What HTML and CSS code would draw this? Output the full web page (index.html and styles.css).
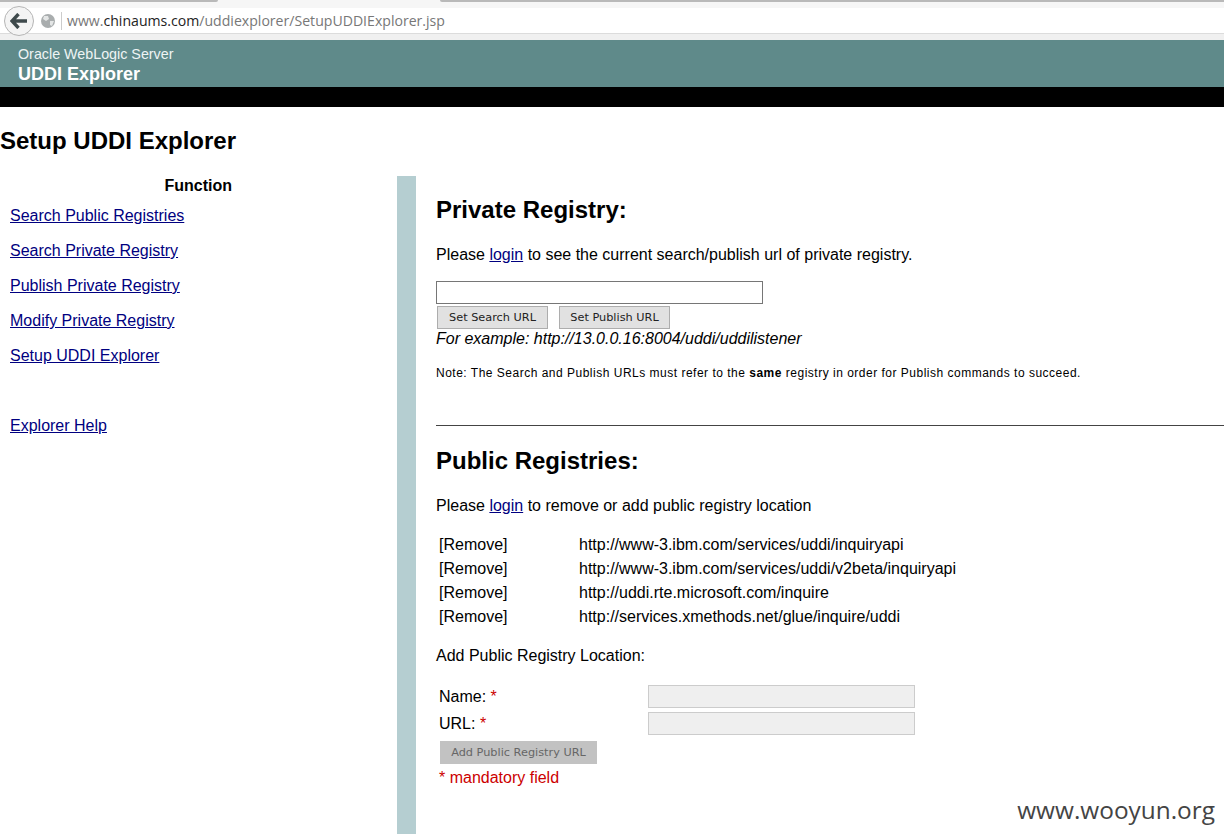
FILE: index.html
```html
<!DOCTYPE html>
<html>
<head>
<meta charset="utf-8">
<title>Setup UDDI Explorer</title>
<link rel="stylesheet" href="styles.css">
</head>
<body>
<div class="chrome">
  <div class="tabstrip"><span class="tabedge left"></span><span class="tabedge right"></span></div>
  <div class="navbar">
    <span class="back">
      <svg width="18" height="16" viewBox="0 0 18 16"><path d="M8.5 1 L2 8 L8.5 15 M2.5 8 H17" fill="none" stroke="#3f4a4c" stroke-width="3.4"/></svg>
    </span>
    <svg class="globe" width="14" height="14" viewBox="0 0 14 14"><circle cx="7" cy="7" r="7" fill="#a9adae"/><path d="M3 2 L7 2 L8 5 L5 7 L2 5 Z M9 7 L13 7 L11 12 L9 11 Z" fill="#e4e6e6"/></svg>
    <span class="sep"></span>
    <span class="url">www.<span class="domain">chinaums.com</span>/uddiexplorer/SetupUDDIExplorer.jsp</span>
  </div>
</div>
<header class="banner">
  <div class="product">Oracle WebLogic Server</div>
  <div class="appname">UDDI Explorer</div>
</header>
<div class="blackbar"></div>
<h1 class="pagetitle">Setup UDDI Explorer</h1>
<div class="columns">
  <nav class="side">
    <div class="sidehead">Function</div>
    <a class="sidelink" href="#">Search Public Registries</a>
    <a class="sidelink" href="#">Search Private Registry</a>
    <a class="sidelink" href="#">Publish Private Registry</a>
    <a class="sidelink" href="#">Modify Private Registry</a>
    <a class="sidelink" href="#">Setup UDDI Explorer</a>
    <a class="sidelink helplink" href="#">Explorer Help</a>
  </nav>
  <div class="stripe"></div>
  <main class="content">
    <h2 class="sectitle first">Private Registry:</h2>
    <p class="line">Please <a href="#">login</a> to see the current search/publish url of private registry.</p>
    <input class="urlinput" type="text">
    <div class="btnrow">
      <button class="btn">Set Search URL</button>
      <button class="btn">Set Publish URL</button>
    </div>
    <div class="example">For example: http://13.0.0.16:8004/uddi/uddilistener</div>
    <p class="note">Note: The Search and Publish URLs must refer to the <b>same</b> registry in order for Publish commands to succeed.</p>
    <hr class="rule">
    <h2 class="sectitle">Public Registries:</h2>
    <p class="line">Please <a href="#">login</a> to remove or add public registry location</p>
    <div class="registries">
      <span>[Remove]</span><span>http://www-3.ibm.com/services/uddi/inquiryapi</span>
      <span>[Remove]</span><span>http://www-3.ibm.com/services/uddi/v2beta/inquiryapi</span>
      <span>[Remove]</span><span>http://uddi.rte.microsoft.com/inquire</span>
      <span>[Remove]</span><span>http://services.xmethods.net/glue/inquire/uddi</span>
    </div>
    <p class="line addtitle">Add Public Registry Location:</p>
    <div class="addform">
      <span>Name: <span class="req">*</span></span><input class="field" type="text" disabled>
      <span>URL: <span class="req">*</span></span><input class="field" type="text" disabled>
    </div>
    <button class="btn addbtn" disabled>Add Public Registry URL</button>
    <div class="mandatory">* mandatory field</div>
  </main>
</div>
<div class="watermark">www.wooyun.org</div>
</body>
</html>
```
FILE: styles.css
```css
html, body { margin: 0; padding: 0; background: #fff; }
body { position: relative; width: 1224px; height: 840px; overflow: hidden; font-family: "Liberation Sans", Arial, sans-serif; font-size: 16px; color: #000; }
a { color: #000080; }
.chrome { height: 40px; background: #f0f0f0; display: flex; flex-direction: column; }
.tabstrip { height: 8px; background: #f6f6f6; display: flex; justify-content: space-between; }
.tabedge { height: 2px; background: #b9b9b9; }
.tabedge.left { width: 218px; border-bottom-right-radius: 4px; }
.tabedge.right { width: 784px; border-bottom-left-radius: 4px; }
.navbar { height: 26px; background: #fff; display: flex; align-items: center; border-bottom: 1px solid #dcdcdc; box-sizing: border-box; }
.back { width: 30px; height: 30px; margin-left: 4px; border: 1px solid #b5b5b5; border-radius: 50%; background: #f4f4f4; display: flex; align-items: center; justify-content: center; box-sizing: border-box; }
.globe { margin-left: 7px; }
.sep { width: 1px; height: 18px; background: #ccc; margin-left: 6px; }
.url { font-family: "Open Sans", "Noto Sans", sans-serif; font-size: 14.1px; color: #777; margin-left: 5px; }
.domain { color: #222; }
.banner { height: 47px; background: #5f8a8a; color: #fff; padding-left: 18px; box-sizing: border-box; padding-top: 5px; }
.product { font-size: 14.3px; line-height: 18px; color: #eef4f4; }
.appname { font-size: 18px; font-weight: bold; line-height: 22px; }
.blackbar { height: 20px; background: #000; }
.pagetitle { margin: 19px 0 0; font-size: 24px; line-height: 30px; font-weight: bold; }
.columns { display: flex; margin-top: 20px; height: 658px; }
.side { width: 397px; flex: none; box-sizing: border-box; padding-left: 10px; padding-top: 1px; }
.sidehead { font-weight: bold; width: 222px; text-align: right; line-height: 18px; margin-bottom: 3px; }
.sidelink { display: block; line-height: 18px; margin-top: 17px; width: max-content; }
.sidehead + .sidelink { margin-top: 12px; }
.helplink { margin-top: 52px; }
.stripe { width: 19px; flex: none; background: #b5ced1; }
.content { flex: 1; padding-left: 20px; min-width: 0; }
.sectitle { margin: 0; font-size: 24px; line-height: 30px; font-weight: bold; }
.sectitle.first { margin-top: 19px; }
.line { margin: 21px 0 0; line-height: 18px; }
.urlinput { display: block; margin-top: 17px; width: 327px; height: 23px; box-sizing: border-box; border: 1px solid #767676; background: #fff; padding: 0; }
.btnrow { display: flex; gap: 11px; margin-top: 2px; padding-left: 1px; }
.btn { font-family: "DejaVu Sans", sans-serif; font-size: 11.3px; width: 111px; height: 23px; padding: 0; background: #e1e1e1; border: 1px solid #adadad; color: #222; box-sizing: border-box; border-radius: 0; white-space: nowrap; }
.example { font-style: italic; line-height: 20px; }
.note { margin: 16px 0 0; font-size: 12px; line-height: 16px; letter-spacing: 0.5px; }
.rule { margin: 44px 0 0; border: 0; border-top: 1px solid #444; height: 0; }
.rule + .sectitle { margin-top: 20px; }
.registries { display: grid; grid-template-columns: 140px 1fr; grid-auto-rows: 24px; margin-top: 18px; padding-left: 3px; align-items: center; }
.addtitle { margin-top: 18px; }
.addform { display: grid; grid-template-columns: 209px 267px; grid-auto-rows: 23px; row-gap: 4px; margin-top: 20px; padding-left: 3px; align-items: center; }
.req { color: #c00; }
.field { width: 267px; height: 23px; box-sizing: border-box; border: 1px solid #ccc; background: #efefef; padding: 0; }
.addbtn { display: block; width: 157px; margin: 6px 0 0 4px; background: #c2c2c2; border-color: #c2c2c2; color: #666; }
.mandatory { color: #cc0000; margin: 3px 0 0 3px; line-height: 22px; }
.watermark { position: absolute; right: 9px; top: 796px; font-family: "Open Sans", "Noto Sans", sans-serif; font-size: 24.4px; line-height: 28px; color: #444; }
```
